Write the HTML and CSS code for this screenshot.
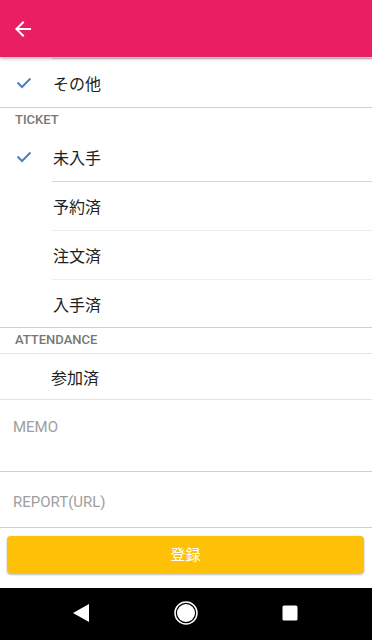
FILE: index.html
```html
<!DOCTYPE html>
<html lang="ja">
<head>
    <meta charset="UTF-8">
    <title>登録</title>
    <link rel="stylesheet" href="styles.css">
</head>
<body>
<div id="screen">
    <header class="appbar">
        <a href="javascript:;" class="back">
            <svg width="24" height="24" viewBox="0 0 24 24"><path fill="#fff" d="M20 11H7.83l5.59-5.59L12 4l-8 8 8 8 1.41-1.41L7.83 13H20v-2z"/></svg>
        </a>
    </header>
    <main class="content">
        <div class="inset-line"></div>
        <div class="row">
            <span class="check"><svg width="16" height="12" viewBox="0 0 16 12"><path d="M1.5 5.5l4.5 4.5 8.5-8.5" fill="none" stroke="#4a80c0" stroke-width="2"/></svg></span>
            <span class="label">その他</span>
        </div>
        <div class="line"></div>
        <div class="subheader">TICKET</div>
        <div class="row">
            <span class="check"><svg width="16" height="12" viewBox="0 0 16 12"><path d="M1.5 5.5l4.5 4.5 8.5-8.5" fill="none" stroke="#4a80c0" stroke-width="2"/></svg></span>
            <span class="label">未入手</span>
        </div>
        <div class="inset-line"></div>
        <div class="row">
            <span class="check"></span>
            <span class="label">予約済</span>
        </div>
        <div class="inset-line light"></div>
        <div class="row">
            <span class="check"></span>
            <span class="label">注文済</span>
        </div>
        <div class="inset-line light"></div>
        <div class="row last">
            <span class="check"></span>
            <span class="label">入手済</span>
        </div>
        <div class="line"></div>
        <div class="subheader">ATTENDANCE</div>
        <div class="line light"></div>
        <div class="row switch">
            <span class="label">参加済</span>
        </div>
        <div class="line light"></div>
        <div class="field memo">MEMO</div>
        <div class="line"></div>
        <div class="field report">REPORT(URL)</div>
        <div class="line"></div>
        <button class="submit">登録</button>
    </main>
    <nav class="navbar">
        <svg width="18" height="20" viewBox="0 0 18 20"><path d="M17 1v18L1 10z" fill="#fff"/></svg>
        <svg width="24" height="24" viewBox="0 0 24 24"><circle cx="12" cy="12" r="11" fill="none" stroke="#fff" stroke-width="1.5"/><circle cx="12" cy="12" r="9" fill="#fff"/></svg>
        <svg width="16" height="16" viewBox="0 0 16 16"><rect x="0.5" y="0.5" width="15" height="15" rx="1.5" fill="#fff"/></svg>
    </nav>
</div>
</body>
</html>
```

FILE: styles.css
```css
html,body{
    margin: 0;
    padding: 0;
}
body{
    font-family: Roboto, "Noto Sans CJK JP", sans-serif;
    color: #212121;
    background: #fff;
}
#screen{
    width: 372px;
    height: 640px;
    display: flex;
    flex-direction: column;
    overflow: hidden;
}
.appbar{
    height: 57px;
    flex: none;
    background: #e91e63;
    display: flex;
    align-items: center;
    padding-left: 11px;
    box-shadow: 0 2px 3px rgba(0,0,0,0.25);
    position: relative;
    z-index: 2;
}
.back{
    display: flex;
}
.content{
    flex: 1;
    min-height: 0;
    padding-top: 1px;
    overflow: hidden;
}
.line{
    height: 1px;
    background: #cfcfcf;
}
.line.light{
    background: #e4e4e4;
}
.inset-line{
    height: 1px;
    margin-left: 52px;
    background: #d6d6d6;
}
.inset-line.light{
    background: #ececec;
}
.row{
    height: 48px;
    display: flex;
    align-items: center;
}
.row.last{
    height: 47px;
}
.check{
    width: 53px;
    padding-left: 16px;
    box-sizing: border-box;
    display: flex;
    align-items: center;
}
.label{
    font-size: 16px;
    font-family: "Noto Sans CJK JP", sans-serif;
}
.row.switch{
    height: 45px;
    padding-left: 51px;
}
.subheader{
    height: 22px;
    padding: 0 0 3px 15px;
    font-size: 13px;
    font-weight: 500;
    color: #777;
    display: flex;
    align-items: center;
}
.field{
    padding-left: 13px;
    font-size: 15px;
    color: #9e9e9e;
}
.memo{
    height: 71px;
    padding-top: 18px;
    box-sizing: border-box;
}
.report{
    height: 55px;
    line-height: 60px;
}
.submit{
    display: block;
    width: 357px;
    height: 37px;
    margin: 8px 0 0 7px;
    padding: 0 0 2px;
    border: none;
    border-radius: 4px;
    background: #ffc107;
    color: #fff;
    font-size: 15px;
    font-family: "Noto Sans CJK JP", sans-serif;
    box-shadow: 0 2px 2px rgba(0,0,0,0.24), 0 0 2px rgba(0,0,0,0.12);
}
.navbar{
    height: 50px;
    flex: none;
    background: #000;
    display: flex;
    align-items: center;
    justify-content: space-between;
    padding: 0 74px 2px 72px;
}
```
